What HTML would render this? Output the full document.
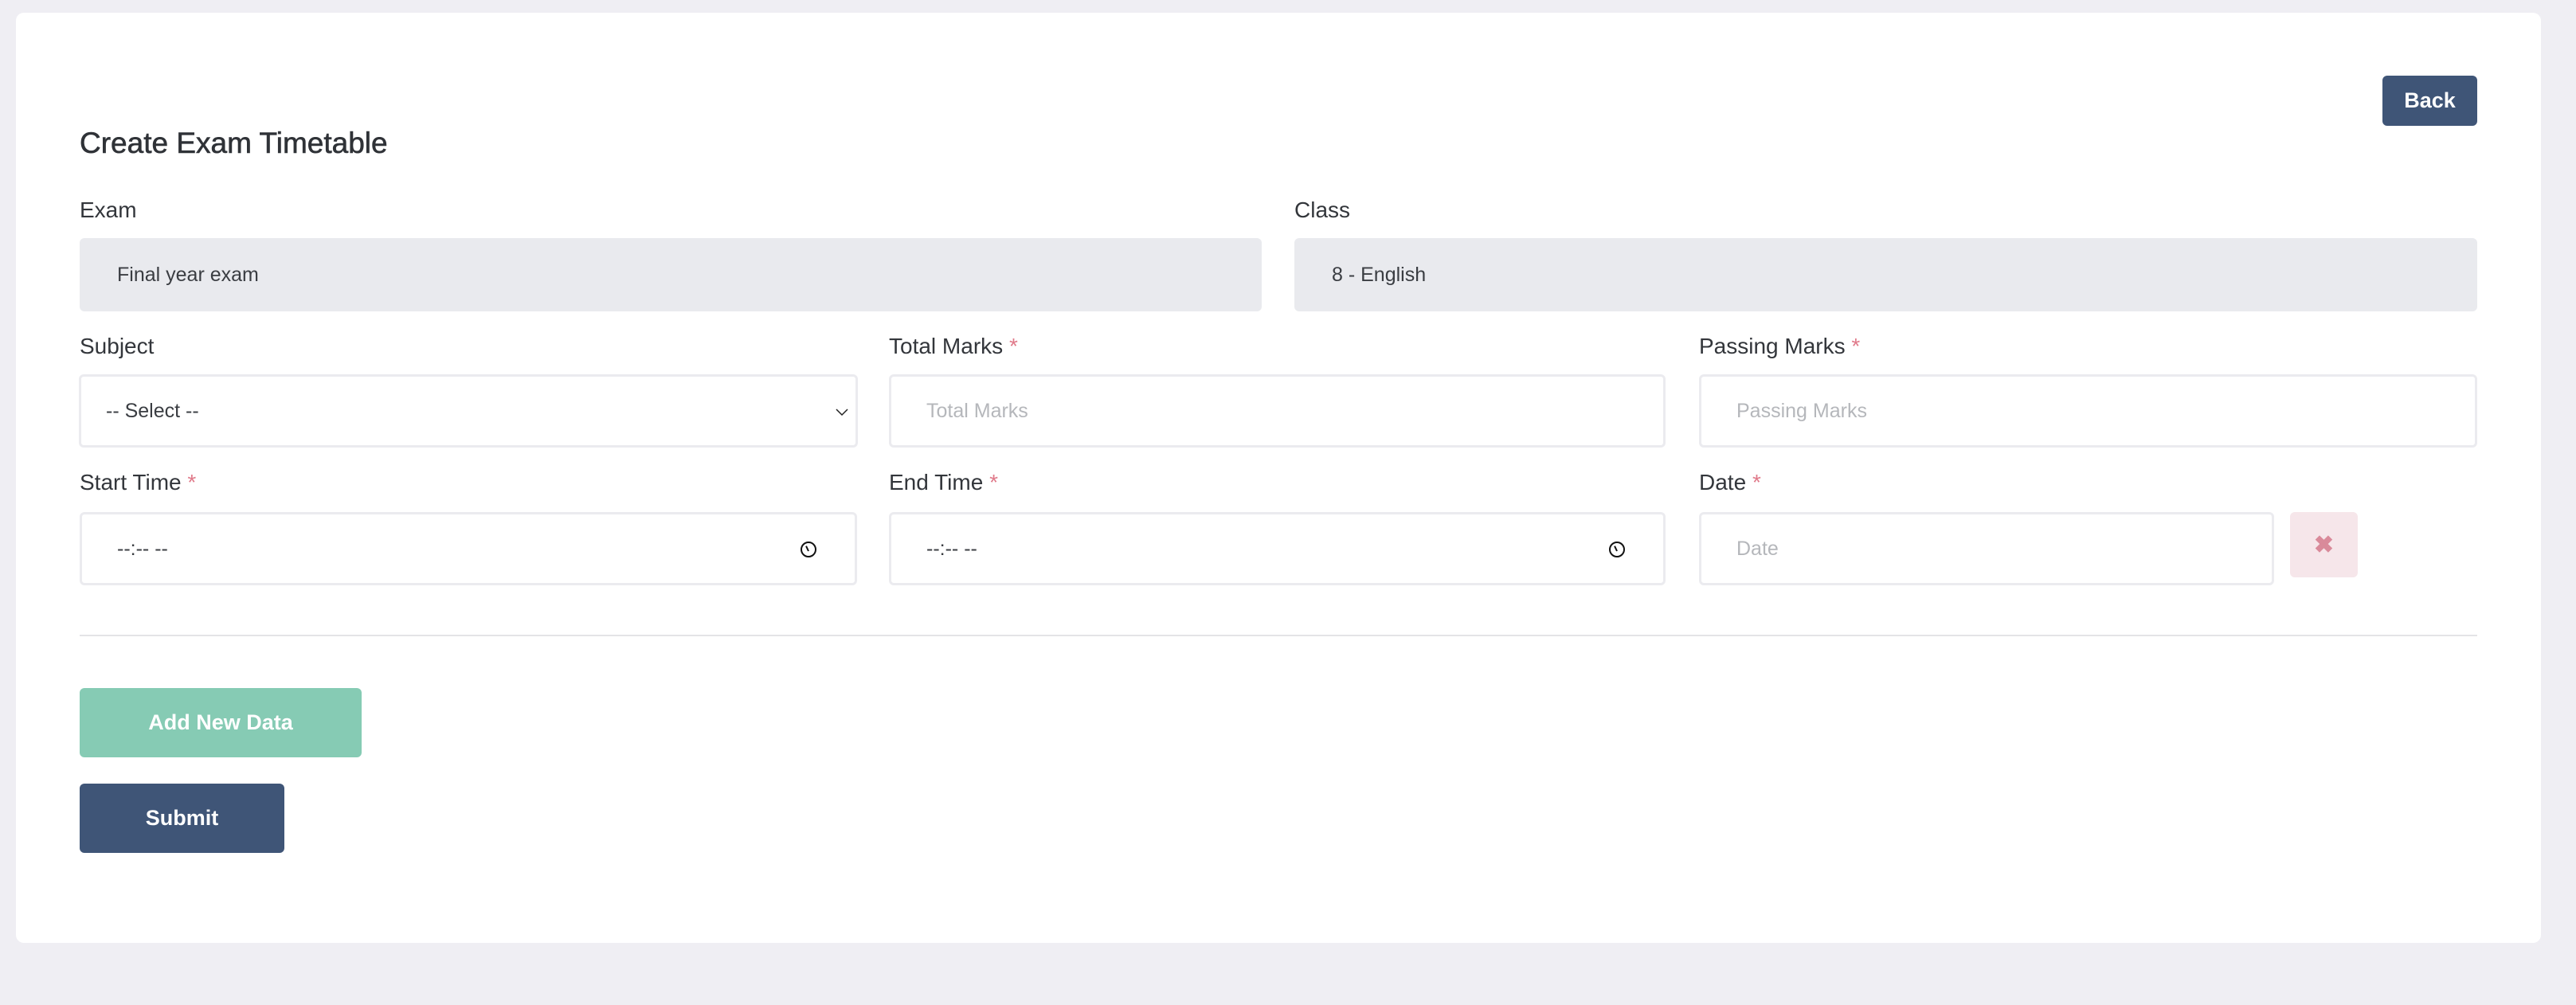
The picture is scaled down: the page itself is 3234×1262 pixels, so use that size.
<!DOCTYPE html>
<html><head><meta charset="utf-8"><style>
*{box-sizing:border-box;margin:0;padding:0}
body{width:3234px;height:1262px;background:#efeef3;font-family:"Liberation Sans",sans-serif;position:relative;overflow:hidden;color:#33363b}
.card{position:absolute;left:20px;top:16px;width:3170px;height:1168px;background:#fff;border-radius:10px}
.a{position:absolute}
.lbl{font-size:28px;color:#33363b;line-height:34px}
.lbl .s{color:#e07a8a}
.inp{position:absolute;height:92px;border:3px solid #ebebef;border-radius:6px;background:#fff;font-size:25px;color:#3a3d42;padding-left:44px;display:flex;align-items:center}
.ro{background:#e9eaee;border-color:#e9eaee}
.ph{color:#b5b7bb}
.btn{position:absolute;border-radius:6px;color:#fff;font-weight:bold;display:flex;align-items:center;justify-content:center}
.clock{position:absolute;right:48px;top:34px;width:20px;height:20px;border:2px solid #111;border-radius:50%}
.clock:after{content:"";position:absolute;left:7px;top:3px;width:2px;height:7px;background:#111;transform:rotate(-25deg);transform-origin:bottom}
</style></head><body>
<div class="card"></div>
<div class="btn" style="left:2991px;top:95px;width:119px;height:63px;background:#3f5577;font-size:27px">Back</div>
<div class="a" style="left:100px;top:159px;font-size:37px;color:#2f3237;line-height:42px;-webkit-text-stroke:0.6px #2f3237">Create Exam Timetable</div>

<div class="a lbl" style="left:100px;top:247px">Exam</div>
<div class="a lbl" style="left:1625px;top:247px">Class</div>
<div class="inp ro" style="left:100px;top:299px;width:1484px">Final year exam</div>
<div class="inp ro" style="left:1625px;top:299px;width:1485px">8 - English</div>

<div class="a lbl" style="left:100px;top:418px">Subject</div>
<div class="a lbl" style="left:1116px;top:418px">Total Marks <span class="s">*</span></div>
<div class="a lbl" style="left:2133px;top:418px">Passing Marks <span class="s">*</span></div>
<div class="inp" style="left:99px;top:470px;width:978px;padding-left:31px">-- Select --
<svg class="a" style="right:6px;top:36px" width="22" height="16" viewBox="0 0 22 16"><path d="M4 5l7 7 7-7" stroke="#222" stroke-width="1.5" fill="none"/></svg></div>
<div class="inp ph" style="left:1116px;top:470px;width:975px">Total Marks</div>
<div class="inp ph" style="left:2133px;top:470px;width:977px">Passing Marks</div>

<div class="a lbl" style="left:100px;top:589px">Start Time <span class="s">*</span></div>
<div class="a lbl" style="left:1116px;top:589px">End Time <span class="s">*</span></div>
<div class="a lbl" style="left:2133px;top:589px">Date <span class="s">*</span></div>
<div class="inp" style="left:100px;top:643px;width:976px">--:-- --<span class="clock"></span></div>
<div class="inp" style="left:1116px;top:643px;width:975px">--:-- --<span class="clock"></span></div>
<div class="inp ph" style="left:2133px;top:643px;width:722px">Date</div>
<div class="btn" style="left:2875px;top:643px;width:85px;height:82px;background:#f6e6ea;color:#d98a9a;font-size:30px">✖</div>

<div class="a" style="left:100px;top:797px;width:3010px;height:2px;background:#e4e4e6"></div>

<div class="btn" style="left:100px;top:864px;width:354px;height:87px;background:#86cbb4;font-size:27px">Add New Data</div>
<div class="btn" style="left:100px;top:984px;width:257px;height:87px;background:#3f5577;font-size:27px">Submit</div>
</body></html>
